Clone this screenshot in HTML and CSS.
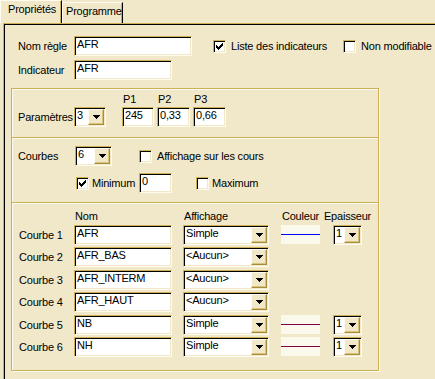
FILE: index.html
```html
<!DOCTYPE html>
<html lang="fr">
<head>
    <meta charset="UTF-8">
    <title>Propriétés de la règle</title>
    <link rel="stylesheet" href="styles.css">
</head>
<body>
    <div class="tabs">
        <div class="tab active">Propriétés</div>
        <div class="tab">Programme</div>
    </div>

    <div class="panel">
        <div class="top">
            <div class="row">
                <span class="lbl">Nom règle</span>
                <div class="field w118">AFR</div>
                <span class="cb checked first"><svg width="7" height="7" viewBox="0 0 7 7"><path d="M6 0h1v1H6z M5 1h2v1H5z M0 2h1v1H0z M4 2h3v1H4z M0 3h2v1H0z M3 3h3v1H3z M0 4h5v1H0z M1 5h3v1H1z M2 6h1v1H2z"/></svg></span>
                <span class="cbtext">Liste des indicateurs</span>
                <span class="cb second"></span>
                <span class="cbtext">Non modifiable</span>
            </div>
            <div class="row row2">
                <span class="lbl">Indicateur</span>
                <div class="field w98">AFR</div>
            </div>
        </div>

        <div class="group">
            <!-- paramètres -->
            <div class="sec params">
                <span class="lbl">Paramètres</span>
                <div class="combo w32"><span class="val">3</span><span class="btn"><svg width="7" height="4" viewBox="0 0 7 4"><path d="M0 0h7v1H0z M1 1h5v1H1z M2 2h3v1H2z M3 3h1v1H3z"/></svg></span></div>
                <div class="pcols">
                    <div class="pcol"><span class="plbl">P1</span><div class="field w32">245</div></div>
                    <div class="pcol"><span class="plbl">P2</span><div class="field w33">0,33</div></div>
                    <div class="pcol"><span class="plbl">P3</span><div class="field w33">0,66</div></div>
                </div>
            </div>

            <!-- courbes -->
            <div class="sec courbes">
                <div class="row">
                    <span class="lbl w57">Courbes</span>
                    <div class="combo w37"><span class="val">6</span><span class="btn"><svg width="7" height="4" viewBox="0 0 7 4"><path d="M0 0h7v1H0z M1 1h5v1H1z M2 2h3v1H2z M3 3h1v1H3z"/></svg></span></div>
                    <span class="cb aff"></span>
                    <span class="cbtext">Affichage sur les cours</span>
                </div>
                <div class="row row-min">
                    <div class="chk w63">
                        <span class="cb checked"><svg width="7" height="7" viewBox="0 0 7 7"><path d="M6 0h1v1H6z M5 1h2v1H5z M0 2h1v1H0z M4 2h3v1H4z M0 3h2v1H0z M3 3h3v1H3z M0 4h5v1H0z M1 5h3v1H1z M2 6h1v1H2z"/></svg></span>
                        <span class="cbtext tight">Minimum</span>
                    </div>
                    <div class="field w33">0</div>
                    <span class="cb maxi"></span>
                    <span class="cbtext tight">Maximum</span>
                </div>
            </div>

            <!-- liste des courbes -->
            <div class="sec curves">
                <span></span>
                <span class="hd">Nom</span>
                <span class="hd">Affichage</span>
                <span class="hd center">Couleur</span>
                <span class="hd mid">Epaisseur</span>

                <span class="lbl">Courbe 1</span>
                <div class="field w98">AFR</div>
                <div class="combo w86"><span class="val">Simple</span><span class="btn"><svg width="7" height="4" viewBox="0 0 7 4"><path d="M0 0h7v1H0z M1 1h5v1H1z M2 2h3v1H2z M3 3h1v1H3z"/></svg></span></div>
                <div class="swatch"><div class="line blue"></div></div>
                <div class="combo w29"><span class="val">1</span><span class="btn"><svg width="7" height="4" viewBox="0 0 7 4"><path d="M0 0h7v1H0z M1 1h5v1H1z M2 2h3v1H2z M3 3h1v1H3z"/></svg></span></div>

                <span class="lbl">Courbe 2</span>
                <div class="field w98">AFR_BAS</div>
                <div class="combo w86"><span class="val">&lt;Aucun&gt;</span><span class="btn"><svg width="7" height="4" viewBox="0 0 7 4"><path d="M0 0h7v1H0z M1 1h5v1H1z M2 2h3v1H2z M3 3h1v1H3z"/></svg></span></div>
                <span></span>
                <span></span>

                <span class="lbl">Courbe 3</span>
                <div class="field w98">AFR_INTERM</div>
                <div class="combo w86"><span class="val">&lt;Aucun&gt;</span><span class="btn"><svg width="7" height="4" viewBox="0 0 7 4"><path d="M0 0h7v1H0z M1 1h5v1H1z M2 2h3v1H2z M3 3h1v1H3z"/></svg></span></div>
                <span></span>
                <span></span>

                <span class="lbl">Courbe 4</span>
                <div class="field w98">AFR_HAUT</div>
                <div class="combo w86"><span class="val">&lt;Aucun&gt;</span><span class="btn"><svg width="7" height="4" viewBox="0 0 7 4"><path d="M0 0h7v1H0z M1 1h5v1H1z M2 2h3v1H2z M3 3h1v1H3z"/></svg></span></div>
                <span></span>
                <span></span>

                <span class="lbl">Courbe 5</span>
                <div class="field w98">NB</div>
                <div class="combo w86"><span class="val">Simple</span><span class="btn"><svg width="7" height="4" viewBox="0 0 7 4"><path d="M0 0h7v1H0z M1 1h5v1H1z M2 2h3v1H2z M3 3h1v1H3z"/></svg></span></div>
                <div class="swatch"><div class="line maroon"></div></div>
                <div class="combo w29"><span class="val">1</span><span class="btn"><svg width="7" height="4" viewBox="0 0 7 4"><path d="M0 0h7v1H0z M1 1h5v1H1z M2 2h3v1H2z M3 3h1v1H3z"/></svg></span></div>

                <span class="lbl">Courbe 6</span>
                <div class="field w98">NH</div>
                <div class="combo w86"><span class="val">Simple</span><span class="btn"><svg width="7" height="4" viewBox="0 0 7 4"><path d="M0 0h7v1H0z M1 1h5v1H1z M2 2h3v1H2z M3 3h1v1H3z"/></svg></span></div>
                <div class="swatch"><div class="line maroon"></div></div>
                <div class="combo w29"><span class="val">1</span><span class="btn"><svg width="7" height="4" viewBox="0 0 7 4"><path d="M0 0h7v1H0z M1 1h5v1H1z M2 2h3v1H2z M3 3h1v1H3z"/></svg></span></div>
            </div>
        </div>
    </div>
</body>
</html>
```

FILE: styles.css
```css
body {
    margin: 0;
    background: #f1e8ca;
    font: 11px/13px "Liberation Sans", Arial, sans-serif;
    letter-spacing: -0.2px;
    color: #000;
    overflow: hidden;
}

/* onglets */
.tabs {
    display: flex;
    align-items: flex-end;
    height: 23px;
}
.tab {
    box-sizing: border-box;
    width: 61px;
    height: 21px;
    padding: 2px 0 0 3px;
    border-left: 1px solid #fffbee;
    border-top: 1px solid #fffbee;
    border-right: 1px solid #000;
    box-shadow: inset -1px 0 0 #cdaf55;
}
.tab.active {
    width: 62px;
    height: 23px;
    padding: 2px 0 0 7px;
}

.panel {
    box-sizing: border-box;
    width: 432px;
    height: 356px;
    margin-left: 3px;
    border: 1px solid #cdaf55;
    border-bottom: 0;
    border-right: 0;
    box-shadow: inset 1px 1px 0 #000;
}
.top {
    padding: 12px 0 0 14px;
}
.row {
    display: flex;
    align-items: center;
    height: 20px;
}
.row2 {
    margin-top: 4px;
}
.lbl {
    display: flex;
    align-items: center;
    width: 56px;
    height: 20px;
    white-space: nowrap;
}
.w57 { width: 57px; }

/* champs */
.field {
    box-sizing: border-box;
    height: 20px;
    padding: 1px 2px 0;
    background: #fff;
    border: 1px solid;
    border-color: #cdaf55 #fffbee #fffbee #cdaf55;
    box-shadow: inset 1px 1px 0 #000, inset -1px -1px 0 #f1e8ca;
    white-space: nowrap;
    overflow: hidden;
}
.w118 { width: 118px; }
.w98 { width: 98px; }
.w86 { width: 86px; }
.w37 { width: 37px; }
.w33 { width: 33px; }
.w32 { width: 32px; }
.w29 { width: 29px; }

.combo {
    box-sizing: border-box;
    display: flex;
    height: 20px;
    background: #fff;
    border: 1px solid;
    border-color: #cdaf55 #fffbee #fffbee #cdaf55;
    box-shadow: inset 1px 1px 0 #000, inset -1px -1px 0 #f1e8ca;
}
.combo .val {
    flex: 1;
    padding: 1px 0 0 2px;
    white-space: nowrap;
    overflow: hidden;
}
.combo .btn {
    box-sizing: border-box;
    display: flex;
    align-items: center;
    justify-content: center;
    width: 16px;
    margin: 1px 1px 1px 0;
    background: #f1e8ca;
    border: 1px solid;
    border-color: #fffbee #a88d3c #a88d3c #fffbee;
    box-shadow: inset -1px -1px 0 #d9c27a;
}

/* cases à cocher */
.cb {
    box-sizing: border-box;
    display: flex;
    align-items: center;
    justify-content: center;
    flex: none;
    align-self: flex-start;
    width: 13px;
    height: 13px;
    margin-top: 4px;
    background: #fff;
    border: 1px solid;
    border-color: #cdaf55 #fffbee #fffbee #cdaf55;
    box-shadow: inset 1px 1px 0 #000, inset -1px -1px 0 #f1e8ca;
}
.cbtext {
    margin-left: 5px;
    white-space: nowrap;
}
.cbtext.tight {
    margin-left: 3px;
}
.cb.first { margin-left: 21px; }
.cb.second { margin-left: 16px; }
.chk {
    display: flex;
    align-items: center;
    height: 20px;
}
.w63 { width: 63px; }

/* cadre */
.group {
    box-sizing: border-box;
    width: 368px;
    margin: 8px 0 0 7px;
    border: 1px solid #cdaf55;
    box-shadow: 1px 1px 0 #fffbee, inset 1px 1px 0 #fffbee;
}
.sec {
    padding-left: 6px;
}
.sec + .sec {
    border-top: 1px solid #cdaf55;
    box-shadow: inset 0 1px 0 #fffbee;
}

.params {
    display: flex;
    align-items: flex-end;
    padding-top: 4px;
    padding-bottom: 10px;
}
.pcols {
    display: flex;
    gap: 3px;
    margin-left: 16px;
}
.pcol {
    display: flex;
    flex-direction: column;
    gap: 1px;
}
.plbl {
    padding-left: 1px;
}

.courbes {
    padding-top: 8px;
    padding-bottom: 9px;
}
.cb.aff { margin-left: 27px; }
.row-min {
    margin-top: 7px;
    margin-left: 58px;
}
.cb.maxi { margin-left: 24px; }

/* liste des courbes */
.curves {
    display: grid;
    grid-template-columns: 56px 109px 98px 52px 29px;
    grid-template-rows: 13px 20px 21px 20px 21px 20px 20px;
    row-gap: 2px;
    align-items: start;
    padding-top: 7px;
    padding-bottom: 13px;
}
.hd {
    padding-left: 1px;
    white-space: nowrap;
}
.hd.center {
    width: 39px;
    padding-left: 0;
    text-align: center;
}
.hd.mid {
    justify-self: center;
    padding-left: 0;
}
.curves .lbl {
    padding-left: 1px;
}
.swatch {
    display: flex;
    align-items: center;
    width: 39px;
    height: 19px;
    background: #faf9ec;
}
.line {
    width: 100%;
    height: 1px;
}
.blue { background: #0000ff; }
.maroon { background: #800040; }
```
